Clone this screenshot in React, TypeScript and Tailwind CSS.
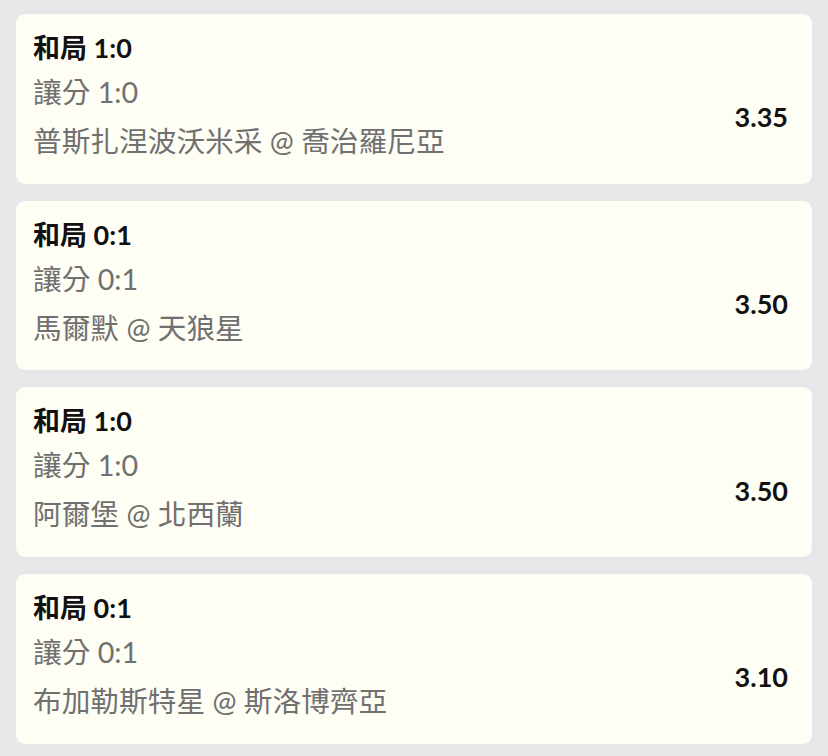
const bets = [
  { title: '和局 1:0', handicap: '讓分 1:0', match: '普斯扎涅波沃米采 @ 喬治羅尼亞', odds: '3.35' },
  { title: '和局 0:1', handicap: '讓分 0:1', match: '馬爾默 @ 天狼星', odds: '3.50' },
  { title: '和局 1:0', handicap: '讓分 1:0', match: '阿爾堡 @ 北西蘭', odds: '3.50' },
  { title: '和局 0:1', handicap: '讓分 0:1', match: '布加勒斯特星 @ 斯洛博齊亞', odds: '3.10' },
];

function BetCard({ title, handicap, match, odds }: (typeof bets)[number]) {
  return (
    <div className="h-[169.7px] rounded-[9px] bg-[#fefef5] pl-[17px] pr-6 pt-[18px]">
      <div className="text-[27px] font-bold leading-[32px] text-[#111]">{title}</div>
      <div className="mt-2 flex items-center justify-between">
        <div className="text-[#707070]">
          <div className="text-[28.7px] leading-[40px]">{handicap}</div>
          <div className="mt-[9px] text-[28.7px] leading-[40px]">{match}</div>
        </div>
        <div className="mt-[2px] text-[27px] font-bold text-[#111]">{odds}</div>
      </div>
    </div>
  );
}

export default function App() {
  return (
    <div
      className="min-h-[756px] bg-[#e6e7e9] px-4 pt-[14px]"
      style={{ fontFamily: 'Lato, "Noto Sans CJK TC", sans-serif' }}
    >
      <div className="flex flex-col gap-[17px]">
        {bets.map((b, i) => (
          <BetCard key={i} {...b} />
        ))}
      </div>
    </div>
  );
}
